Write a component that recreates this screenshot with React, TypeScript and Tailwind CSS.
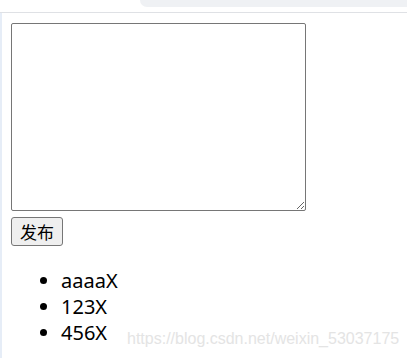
import { useState } from "react";

const initialItems = ["aaaa", "123", "456"];

const App = () => {
  const [text, setText] = useState("");
  const [items, setItems] = useState<string[]>(initialItems);

  const publish = () => {
    if (!text.trim()) return;
    setItems([...items, text]);
    setText("");
  };

  const remove = (i: number) => setItems(items.filter((_, idx) => idx !== i));

  return (
    <div className="relative h-[358px] w-[407px] overflow-hidden bg-white font-['Noto_Sans','Noto_Sans_CJK_SC',sans-serif] text-black">
      {/* browser chrome remnant */}
      <div className="flex h-[13px] border-b border-[#dfe1e5]">
        <div className="w-[140px]" />
        <div className="h-[7px] flex-1 rounded-bl-[12px] bg-[#eff1f4]" />
      </div>

      <div className="flex h-[345px] border-l-2 border-[#e6edf7]">
        <div className="flex flex-col items-start pl-[9px] pt-[10px]">
          <textarea
            value={text}
            onChange={(e) => setText(e.target.value)}
            className="block h-[188px] w-[295px] resize rounded-[2px] border border-[#767676] bg-white p-[2px] outline-none"
          />
          <button
            onClick={publish}
            className="mt-[6px] h-[29px] rounded-[3px] border border-[#767676] bg-[#efefef] px-[8px] text-[17px] leading-[20px] font-['Noto_Sans_CJK_SC',sans-serif]"
          >
            发布
          </button>

          <ul className="mt-[22px] list-disc pl-[50px] text-[20px] leading-[26px]">
            {items.map((item, i) => (
              <li key={i}>
                {item}
                <span onClick={() => remove(i)} className="cursor-pointer">
                  X
                </span>
              </li>
            ))}
          </ul>
        </div>
      </div>

      {/* watermark */}
      <div className="pointer-events-none absolute left-[127px] top-[329px] font-['Liberation_Sans',sans-serif] text-[16px] leading-[20px] text-[#e4e4e4]">
        https://blog.csdn.net/weixin_53037175
      </div>
    </div>
  );
};

export default App;
